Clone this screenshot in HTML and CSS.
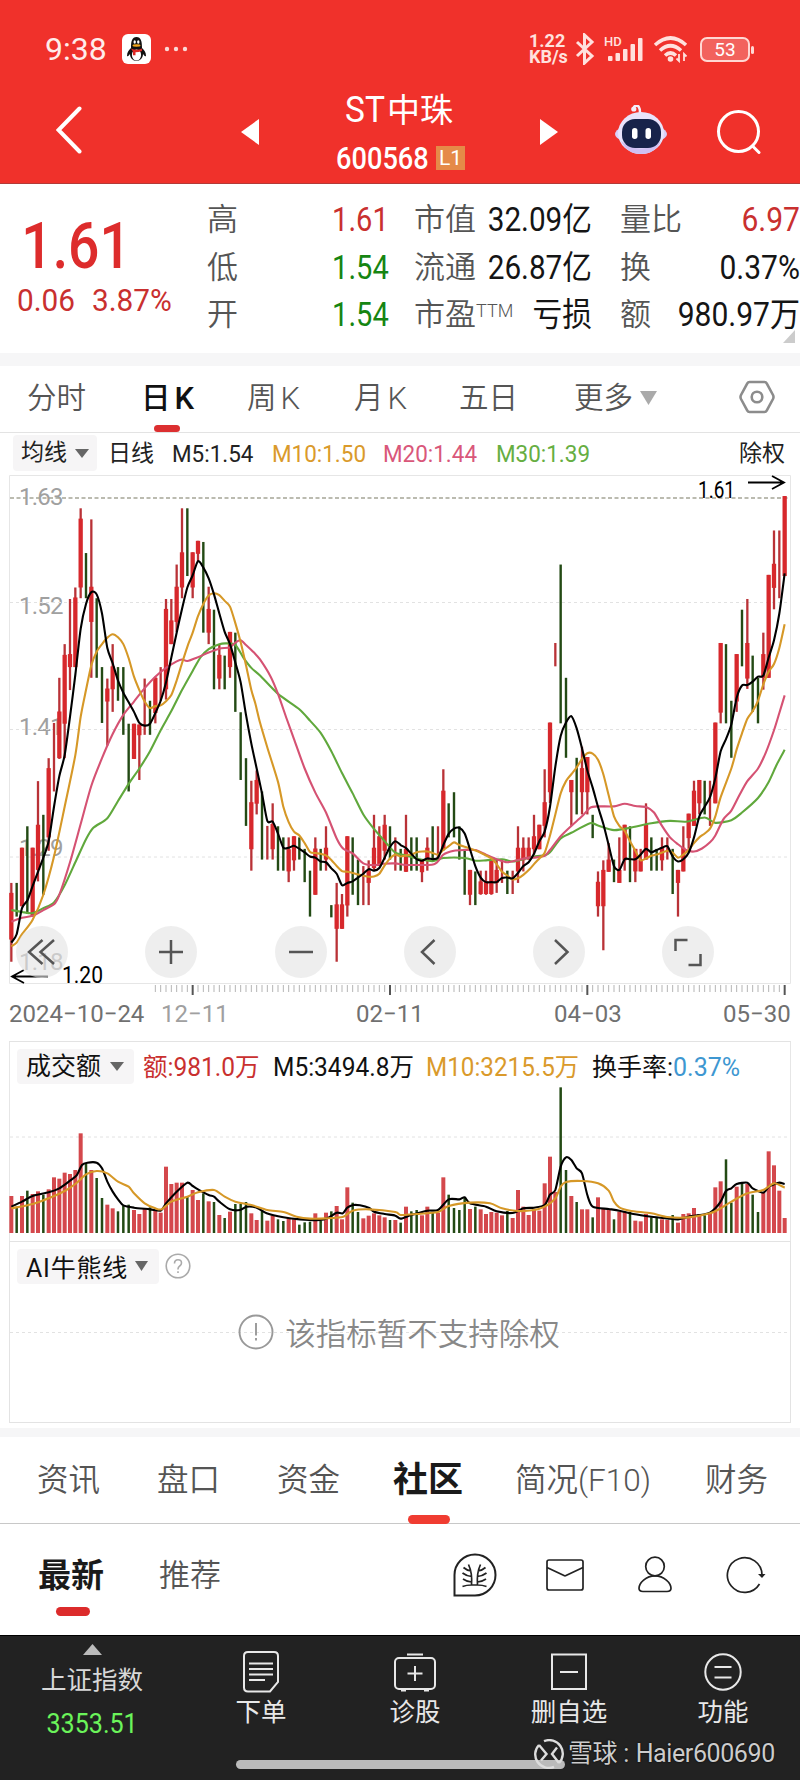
FILE: index.html
```html
<!DOCTYPE html>
<html lang="zh-CN">
<head>
<meta charset="utf-8">
<title>ST中珠 600568</title>
<link rel="stylesheet" href="styles.css">
</head>
<body>
<header class="top">
  <div class="status">
    <span class="clock">9:38</span>
    <svg class="qq" width="29" height="30" viewBox="0 0 29 30"><rect width="29" height="30" rx="6" fill="#fff"/><path d="M5 22c0-4 2-6 4-8C9 7 10 3 14.500 3s5.500 4 5.500 11c2 2 4 4 4 8-1 1-2-1-3-2 0 4-3 7-6.500 7S8 24 8 20c-1 1-2 3-3 2z" fill="#111"/><ellipse cx="14.500" cy="21" rx="4.600" ry="5.500" fill="#fff"/><ellipse cx="12.700" cy="8" rx="1.200" ry="1.700" fill="#fff"/><ellipse cx="16.300" cy="8" rx="1.200" ry="1.700" fill="#fff"/><ellipse cx="14.500" cy="11.500" rx="4" ry="1.200" fill="#f2a51c"/><path d="M9 14.500q5.500 2.500 11 0v2.600q-3.500 1.200-6.500 1.200v3h-2.500v-3.500z" fill="#e02b26"/></svg>
    <svg class="dots" width="24" height="6" viewBox="0 0 24 6" fill="#fbd9d6"><circle cx="3" cy="3" r="2.200"/><circle cx="12" cy="3" r="2.200"/><circle cx="21" cy="3" r="2.200"/></svg>
    <span class="rate">1.22<br>KB/s</span>
    <svg class="bt" width="20" height="32" viewBox="0 0 20 32" fill="none" stroke="#ffe1de" stroke-width="3"><path d="M2 9l15 14-7.500 7V2L17 9 2 23"/></svg>
    <svg class="sig" width="40" height="28" viewBox="0 0 40 28"><g fill="#ffe1de"><rect x="4" y="21" width="4.500" height="5" rx="1"/><rect x="11.500" y="18" width="4.500" height="8" rx="1"/><rect x="19" y="14" width="4.500" height="12" rx="1"/><rect x="26.500" y="9" width="4.500" height="17" rx="1"/><rect x="34" y="3" width="4.500" height="23" rx="1"/></g><text x="0" y="11" class="hd">HD</text></svg>
    <svg class="wifi" width="36" height="28" viewBox="0 0 36 28" fill="none" stroke="#ffe1de" stroke-width="3.600"><path d="M2 10Q17.500-4 33 10M7 15.500Q17.500 6 28 15.500M12 20.500Q17.500 15.500 23 20.500"/><circle cx="17.500" cy="24" r="2.800" fill="#ffe1de" stroke="none"/><path d="M26 19v7l-2.500-2.500M31 26v-7l2.500 2.500" stroke-width="1.800"/></svg>
    <span class="battery">53</span>
  </div>
  <div class="nav">
    <svg width="26" height="48" viewBox="0 0 26 48" fill="none" stroke="#fff" stroke-width="4" stroke-linecap="round" class="back"><path d="M23.500 2.500L2.500 24l21 21.500"/></svg>
    <svg width="18" height="26" viewBox="0 0 18 26" fill="#fff" class="prev"><path d="M18 0v26L0 13z"/></svg>
    <div class="title"><div class="name"><span>ST</span>中珠</div><div class="code"><span class="num">600568</span><span class="lv">L1</span></div></div>
    <svg width="18" height="26" viewBox="0 0 18 26" fill="#fff" class="next"><path d="M0 0v26l18-13z"/></svg>
    <svg width="52" height="50" viewBox="0 0 52 50" class="bot"><path d="M20 5q-2-3 0-4 5-2 5 7" fill="none" stroke="#f4eefc" stroke-width="2.500"/><circle cx="18.800" cy="4" r="2.600" fill="#f4eefc"/><ellipse cx="26" cy="29" rx="26" ry="10" fill="#d9d0f8"/><ellipse cx="26" cy="28" rx="23" ry="21" fill="#e8e3fb"/><path d="M6 36q20 15 40 0-6 13-20 13T6 36z" fill="#cfc0f2"/><rect x="7" y="14" width="39" height="29" rx="13" fill="#17234a"/><rect x="17" y="23" width="5.500" height="11" rx="2.700" fill="#fff"/><rect x="30.500" y="23" width="5.500" height="11" rx="2.700" fill="#fff"/></svg>
    <svg width="44" height="44" viewBox="0 0 44 44" fill="none" stroke="#fff" stroke-width="3" stroke-linecap="round" class="find"><circle cx="21.500" cy="21.500" r="20"/><path d="M35.500 36l6.500 6.500"/></svg>
  </div>
</header>

<section class="quote">
  <div class="last"><div class="price">1.61</div><div class="chg"><span>0.06</span><span>3.87%</span></div></div>
  <div class="cells">
    <span>高</span><b class="red">1.61</b><span>市值</span><b>32.09亿</b><span>量比</span><b class="red">6.97</b>
    <span>低</span><b class="green">1.54</b><span>流通</span><b>26.87亿</b><span>换</span><b>0.37%</b>
    <span>开</span><b class="green">1.54</b><span>市盈<i>TTM</i></span><b>亏损</b><span>额</span><b>980.97万</b>
  </div>
  <svg class="corner" width="12" height="13" viewBox="0 0 12 13"><path d="M12 0v13H0z" fill="#ccc"/></svg>
</section>

<nav class="periods">
  <span>分时</span><span class="on">日<em>K</em></span><span>周<em>K</em></span><span>月<em>K</em></span><span>五日</span><span>更多<svg width="17" height="14" viewBox="0 0 17 14"><path d="M0 0h17L8.500 14z" fill="#aaa"/></svg></span>
  <svg class="gear" width="36" height="34" viewBox="0 0 36 34" fill="none" stroke="#8c8c8c" stroke-width="2.600" stroke-linejoin="round"><path d="M10.500 2h15q1.500 0 2.200 1.300l6.300 11.700q1 2 0 4l-6.300 11.700q-.7 1.300-2.200 1.300h-15q-1.500 0-2.200-1.300L2 19q-1-2 0-4L8.300 3.300Q9 2 10.500 2z"/><circle cx="18" cy="17" r="5.300"/></svg>
</nav>

<section class="ma">
  <span class="chip">均线<svg width="14" height="9" viewBox="0 0 14 9"><path d="M0 0h14L7 9z"/></svg></span>
  <span>日线</span><span class="n">M5:1.54</span><span class="n gold">M10:1.50</span><span class="n pink">M20:1.44</span><span class="n lime">M30:1.39</span><span>除权</span>
</section>

<section class="kline">
  <svg id="k" width="800" height="525" viewBox="0 0 800 525">
    <g class="axis"><text x="19" y="30">1.63</text><text x="19" y="139">1.52</text><text x="19" y="259.500">1.41</text><text x="19" y="381">1.29</text><text x="19" y="495">1.18</text></g>
    <path class="frame" d="M9.500 0.500H790.500V508.500H9.500z"/>
    <path class="grid" d="M10 127.500H790M10 254.500H790M10 382H790"/>
    <path class="limit" d="M10 23H790"/>
  </svg>
  <div class="tools">
    <span><svg viewBox="0 0 52 52"><path d="M26.500 14L13 26l13.500 12M38 14L24.500 26 38 38"/></svg></span>
    <span><svg viewBox="0 0 52 52"><path d="M14 26h24M26 14v24"/></svg></span>
    <span><svg viewBox="0 0 52 52"><path d="M14 26h24"/></svg></span>
    <span><svg viewBox="0 0 52 52"><path d="M30.500 14L18 26l12.500 12"/></svg></span>
    <span><svg viewBox="0 0 52 52"><path d="M22 14l12.500 12L22 38"/></svg></span>
    <span><svg viewBox="0 0 52 52"><path d="M13.500 25V14h12M26.500 39h12V28"/></svg></span>
  </div>
</section>
<div class="dates"><span>2024−10−24</span><span class="dim">12−11</span><span>02−11</span><span>04−03</span><span>05−30</span></div>

<section class="volume">
  <div class="vhead">
    <span class="chip">成交额<svg width="14" height="9" viewBox="0 0 14 9"><path d="M0 0h14L7 9z"/></svg></span>
    <span class="red v1">额:981.0万</span><span class="v2">M5:3494.8万</span><span class="gold v3">M10:3215.5万</span><span class="v4">换手率:<em>0.37%</em></span>
  </div>
  <svg id="v" width="800" height="149" viewBox="0 0 800 149"><path class="grid" d="M10 53H790"/></svg>
</section>

<section class="ai">
  <div class="aihead"><span class="chip">AI牛熊线<svg width="13" height="10" viewBox="0 0 13 10"><path d="M0 0h13L6.500 10z"/></svg></span>
  <svg width="26" height="26" viewBox="0 0 26 26"><circle cx="13" cy="13" r="11.800" fill="none" stroke="#aaa" stroke-width="1.600"/><path d="M9.500 10.500q0-3.700 3.500-3.700t3.500 3.200q0 1.700-1.800 3-1.700 1.200-1.700 3v.5M13 18.200v1.900" fill="none" stroke="#aaa" stroke-width="1.600"/></svg></div>
  <div class="notice"><svg width="36" height="36" viewBox="0 0 36 36" fill="none" stroke="#999" stroke-width="1.900"><circle cx="18" cy="18" r="16.500"/><path d="M18 9v12.500M18 24v2.500"/></svg><span>该指标暂不支持除权</span></div>
</section>

<nav class="sections"><span>资讯</span><span>盘口</span><span>资金</span><span class="on">社区</span><span>简况(F10)</span><span>财务</span></nav>
<nav class="feed">
  <span class="on">最新</span><span>推荐</span>
  <svg width="44" height="44" viewBox="0 0 44 44" fill="none" stroke="#222" stroke-width="2"><path d="M1.500 42.500V22A20.500 20.500 0 1 1 22 42.500z"/><path d="M9.500 33.500q4-1.500 9-1.500h6q5 0 9 1.500M18.500 32q1-12-3-20.500M24.500 32q-1-12 3-20.500M18 18q-4-.5-7.500-3.500M18.500 23.500q-5-.5-9-3.500M18.500 29q-4 0-8.500-3M25 18q4-.5 7.500-3.500M24.500 23.500q5-.5 9-3.500M24.500 29q4 0 8.500-3" stroke-width="1.700"/></svg>
  <svg width="38" height="32" viewBox="0 0 38 32" fill="none" stroke="#222" stroke-width="1.700"><rect x="1" y="1" width="36" height="30" rx="2"/><path d="M1 8.500L18 16.500q1 .6 2 0L37 8.500"/></svg>
  <svg width="34" height="37" viewBox="0 0 34 37" fill="none" stroke="#222" stroke-width="1.700"><circle cx="17" cy="10.500" r="9.300"/><path d="M17 19.800C8 19.800 1 27 1 32.300q0 3.200 4 3.200h24q4 0 4-3.200C33 27 26 19.800 17 19.800z"/></svg>
  <svg width="40" height="38" viewBox="0 0 40 38" fill="none" stroke="#222" stroke-width="1.700"><path d="M33.500 28A17.300 17.300 0 1 1 36 19"/><path d="M32 18h7.500L36 22z" fill="#222" stroke="none"/></svg>
</nav>

<footer class="bar">
  <div class="index"><svg width="19" height="11" viewBox="0 0 19 11"><path d="M9.500 0L19 11H0z" fill="#bbb"/></svg><span>上证指数</span><b>3353.51</b></div>
  <div class="act"><svg width="44" height="42" viewBox="0 0 44 42"><path d="M9 1h26q4 0 4 4v26l-8 9.500H9q-4 0-4-4V5q0-4 4-4z"/><path d="M10 12.500h24M10 18h24M10 23.500h24M10 29h16"/></svg><span>下单</span></div>
  <div class="act"><svg width="44" height="42" viewBox="0 0 44 42"><rect x="2" y="7" width="40" height="31" rx="4"/><path d="M14 3.500h16M22 15v15M14.500 22.500h15M8 39.500h5M31 39.500h5"/></svg><span>诊股</span></div>
  <div class="act"><svg width="44" height="42" viewBox="0 0 44 42"><path d="M5 3.500h34V38H5zM13 21h18"/></svg><span>删自选</span></div>
  <div class="act"><svg width="44" height="42" viewBox="0 0 44 42"><circle cx="22" cy="21" r="17.700"/><path d="M13.500 16h17M13.500 26.500h17"/></svg><span>功能</span></div>
  <div class="home"></div>
  <div class="mark"><svg width="30" height="30" viewBox="0 0 30 30" fill="none" stroke="#ddd" stroke-width="2.400"><path d="M10 2.200A13.500 13.500 0 0 1 25 24M20 27.800A13.500 13.500 0 0 1 5 6"/><path d="M5 6l7.500 9L7 21.500M25 24l-7-9 5-6.500"/></svg><span>雪球<i>:</i> Haier600690</span></div>
</footer>
<script src="chart.js"></script>
</body>
</html>
```
FILE: styles.css
```css
* { box-sizing: border-box; }
body { margin: 0; width: 800px; height: 1780px; overflow: hidden; background: #fff; color: #111; font-family: Roboto, "Noto Sans CJK SC", sans-serif; }
span, b, div { white-space: nowrap; }
svg { display: block; flex: none; }
em, i { font-style: normal; }
.red { color: #c9302f; }
.green { color: #168512; }
.gold { color: #da9a2b; }
.pink { color: #d9577a; }
.lime { color: #66ae42; }

.top { height: 184px; background: #f0312b; border-bottom: 1px solid #b33a38; color: #fff; }
.status { display: flex; align-items: center; height: 98px; padding-left: 45px; }
.clock { width: 77px; font-size: 32px; color: #ffecea; }
.dots { margin-left: 13px; }
.rate { width: 48px; margin-left: 341px; font-size: 18px; line-height: 16px; font-weight: 700; color: #ffe1de; }
.bt { margin-left: -2px; }
.sig { margin-left: 9px; }
.hd { font-size: 13px; font-weight: 500; fill: #ffe1de; }
.wifi { margin-left: 9px; }
.battery { position: relative; width: 50px; height: 25px; margin-left: 11px; border: 2px solid #ffd7d3; border-radius: 7px; background: #f2625d; color: #fff; font-size: 19px; line-height: 22px; text-align: center; }
.battery::after { content: ""; position: absolute; right: -6px; top: 7px; width: 3px; height: 8px; border-radius: 2px; background: #ffd7d3; }
.nav { display: grid; grid-template-columns: 185px 95px 204px 75px 102px 60px; padding-left: 56px; height: 85px; }
.back { margin-top: 8px; }
.prev, .next { margin-top: 21px; }
.bot { margin-top: 7px; }
.find { margin-top: 12px; }
.title { margin-top: -10px; }
.name { height: 47px; margin-left: 9px; font-size: 33px; line-height: 44px; }
.name span { display: inline-block; width: 42px; font-size: 36px; transform: scaleX(.93); transform-origin: left; }
.title .code { display: flex; align-items: center; height: 45px; }
.num { width: 100px; font-size: 32px; transform: scaleX(.85); transform-origin: left; font-weight: 500; }
.lv { width: 29px; height: 24px; background: #e58a48; font-size: 21px; line-height: 25px; text-align: center; }

.quote { position: relative; display: flex; height: 169px; }
.last { width: 207px; }
.price { height: 88px; padding: 24px 0 0 25px; font-size: 65px; line-height: 76px; font-weight: 500; color: #dd2c2c; transform: scaleX(.85); transform-origin: left; }
.chg { display: flex; height: 60px; padding: 10px 0 0 17px; font-size: 32px; line-height: 36px; color: #c9302f; }
.chg span { width: 75px; transform: scaleX(.93); transform-origin: left; }
.cells { display: grid; grid-template-columns: 89px 118px 70px 136px 55px 125px; grid-template-rows: repeat(3, 47.500px); padding-top: 12px; font-size: 31px; line-height: 48px; color: #555; font-weight: 350; }
.cells b { display: flex; font-size: 33px; font-weight: 400; color: #151515; transform: scaleX(.88); transform-origin: left; }
.cells b:nth-child(6n+2) { padding-left: 41px; }
.cells b:nth-child(6n+4) { justify-content: flex-end; width: 108px; transform: scaleX(.9); transform-origin: right; }
.cells b:nth-child(6n) { justify-content: flex-end; transform: scaleX(.91); transform-origin: right; }
.cells b.red { color: #c9302f; }
.cells b.green { color: #168512; }
.cells span i { font-size: 18px; line-height: 0; vertical-align: 8px; }
.corner { position: absolute; right: 5px; bottom: 10px; }

.periods { display: grid; grid-template-columns: 114px 106px 107px 105px 115px 165px 36px; height: 80px; border-top: 13px solid #f6f6f7; border-bottom: 1px solid #e3e3e3; padding-left: 27px; font-size: 29.500px; line-height: 61px; color: #555; font-weight: 350; }
.periods span { display: flex; align-items: center; height: 64px; }
.periods em { margin-left: 4px; font-size: 31px; }
.periods svg { margin-left: 7px; }
.periods .gear { margin: 14px 0 0; }
.periods .on { position: relative; color: #111; font-weight: 500; }
.periods .on::after { content: ""; position: absolute; left: 13px; top: 59px; width: 26px; height: 7px; border-radius: 4px; background: #dc2f30; }

.chip { display: flex; align-items: center; background: #f6f5f6; border-radius: 4px; }
.chip svg { fill: #666; }
.ma { display: grid; grid-template-columns: 95px 64px 100px 111px 113px 243px 60px; height: 42px; padding: 2px 0 0 13px; font-size: 23px; line-height: 38px; color: #222; }
.ma .chip { width: 84px; height: 36px; padding-left: 8px; gap: 8px; }
.ma .n { font-size: 23.500px; transform: scaleX(.955); transform-origin: left; }
.ma .gold { color: #da9a2b; }
.ma .pink { color: #d9577a; }
.ma .lime { color: #66ae42; }

.kline { position: relative; height: 525px; }
.axis text { font-size: 24px; font-weight: 450; fill: #a0a0a0; letter-spacing: -.8px; }
.frame { fill: none; stroke: #e6e6e6; }
.grid { stroke: #e2e2e2; stroke-dasharray: 3 3; }
.limit { stroke: #a5a596; stroke-width: 1.500; stroke-dasharray: 4 2.500; }
.up { fill: #d7282c; }
.upwick { fill: #b93237; }
.down { fill: #234a14; }
.upvol { fill: #d4484c; }
.line { fill: none; stroke-width: 2.100; stroke-linejoin: round; }
.m5 { stroke: #000; }
.m10 { stroke: #d69827; }
.m20 { stroke: #d55273; }
.m30 { stroke: #60a83c; }
.tick { stroke: #b5b5b5; }
.major { stroke: #555; stroke-width: 2; }
.call { font-size: 23px; fill: #000; }
.arrow { fill: none; stroke: #000; stroke-width: 1.800; }
.tools { position: absolute; left: 16px; top: 451px; display: flex; gap: 77.300px; }
.tools span { width: 52px; height: 52px; border-radius: 50%; background: rgba(228, 228, 228, .62); }
.tools path { fill: none; stroke: #555; stroke-width: 2.500; }
.dates { display: grid; grid-template-columns: 152px 195px 198px 169px 70px; padding-left: 9px; height: 41px; font-size: 24px; font-weight: 450; line-height: 28px; color: #707070; }
.dates .dim { color: #a0a0a0; }

.volume { height: 200px; border-top: 1px solid #e3e3e3; margin: 0 9px; border-left: 1px solid #e6e6e6; border-right: 1px solid #e6e6e6; }
.volume > svg { margin-left: -10px; }
.vhead { display: grid; grid-template-columns: 126px 130px 153px 166px 170px; height: 42px; padding: 7px 0 0 7px; font-size: 25px; line-height: 37px; }
.vhead .chip { width: 117px; height: 35px; padding-left: 9px; gap: 9px; }
.vhead > span { transform-origin: left; }
.v1, .v2 { transform: scaleX(.98); }
.v3 { transform: scaleX(.97); }
.v4 em { color: #3e97d1; }
.ai { height: 182px; margin: 0 9px; border: 1px solid #e3e3e3; background: linear-gradient(90deg, #e2e2e2 50%, transparent 50%) 0 90px / 6px 1px repeat-x; }
.aihead { display: flex; align-items: center; height: 48px; padding-left: 7px; gap: 6px; }
.aihead .chip { width: 142px; height: 35px; padding-left: 9px; gap: 7px; font-size: 25px; letter-spacing: .8px; }
.notice { display: flex; align-items: center; justify-content: center; gap: 11px; height: 60px; margin: 12px 2px 0 0; font-size: 30.500px; font-weight: 350; color: #888; }

.sections { display: grid; grid-template-columns: 120px 120px 116px 122px 190px 70px; height: 96px; margin-top: 5px; border-top: 9px solid #f6f6f7; border-bottom: 1.500px solid #c8c8c8; padding-left: 37px; font-size: 31.500px; line-height: 88px; color: #555; font-weight: 350; }
.sections .on, .feed .on { position: relative; color: #1a1a1a; font-weight: 700; }
.sections .on { font-size: 35px; }
.sections .on::after, .feed .on::after { content: ""; position: absolute; height: 9px; border-radius: 5px; background: #f03c31; }
.sections .on::after { left: 15px; bottom: 1px; width: 42px; }
.feed { display: grid; grid-template-columns: 121px 294px 93px 92px 88px 40px; align-items: center; height: 111px; padding: 0 0 10px 38px; font-size: 31px; color: #555; font-weight: 350; }
.feed span { margin-top: -4px; }
.feed .on { font-size: 33px; }
.feed .on::after { left: 18px; top: 58px; width: 34px; background: #dc2b2b; }

.bar { position: relative; display: grid; grid-template-columns: 184px 154px 154px 154px 154px; height: 146px; background: #222; border-top: 1px solid #000; color: #e8e8e8; font-size: 25.500px; }
.index { display: flex; flex-direction: column; align-items: center; padding-top: 8px; color: #d8d8d8; }
.index span { margin-top: 5px; line-height: 40px; }
.index b { font-size: 27px; font-weight: 400; color: #6bf45a; line-height: 48px; transform: scaleX(.93); }
.act { display: flex; flex-direction: column; align-items: center; padding-top: 15px; }
.act svg { fill: none; stroke: #e8e8e8; stroke-width: 2; }
.act span { line-height: 38px; }
.home { position: absolute; left: 236px; top: 124px; width: 329px; height: 9px; border-radius: 5px; background: #bbb; }
.mark { position: absolute; left: 534px; top: 102px; display: flex; align-items: center; gap: 4px; font-size: 25px; line-height: 32px; color: #ccc; text-shadow: 0 0 2px #000; }
.mark span { letter-spacing: -.4px; }
.mark i { margin: 0 1px 0 6px; }
```
FILE: chart.js
```javascript
// Each candle: direction, wick top, wick bottom, optional body top and bottom.
const candles = `r1184,1390,1210,1332 g1184,1272 r1092,1245,1092,1245 g1036,1265 r1092,1272,1092,1272 r918,1180,1032,1150 g1006,1215 r858,1100,884,1065 r766,945 r648,860,736,858 r560,858,588,768 r442,680,586,620 r412,620,438,620 r205,440,232,412 g322,440 r234,648,410,502 g440,648 g620,766 r650,825,676,710 r560,737,618,678 g620,708 g620,797 g768,945 r768,860,768,860 r770,915,770,798 r650,797 g708,797 r645,767,648,740 r620,708 r442,705,468,678 r442,560,498,560 r352,528,410,502 r205,440,320,412 g205,382 r320,440,320,412 r290,345,290,324 g293,530 r410,560,468,530 g470,678 r560,678,588,650 g590,678 r528,648,528,620 g530,737 g738,915 g858,1035 r917,1152,973,1096 r890,1005,915,977 g945,1123 r1035,1123 r976,1123,1030,1096 g1036,1152 g1065,1152 r1065,1182,1096,1154 r1062,1152,1062,1125 g1065,1123 g1095,1182 g1152,1272 r1065,1215,1094,1215 g1095,1152 r1036,1152,1092,1123 g1242,1274 r1184,1390,1240,1304 r1213,1304,1240,1304 r1062,1272,1062,1243 g1065,1215 g1123,1242 r1140,1242 r1125,1242,1152,1184 r1006,1150,1092,1145 r1036,1140,1062,1140 r1006,1123,1032,1100 g1036,1123 r1065,1152 g1095,1152 r1006,1155,1095,1155 g1065,1152 g1065,1152 r1123,1182,1125,1156 r1065,1152,1092,1125 g1036,1123 r1036,1125 r887,1100,943,1096 g976,1065 g947,1065 g1036,1123 g1095,1215 r1150,1242,1150,1215 g1154,1242 r1152,1215,1180,1213 r1152,1215,1180,1213 r1123,1215,1123,1213 r1123,1210,1150,1184 r1123,1184 g1152,1213 r1152,1213 r1036,1184,1092,1154 r1065,1154,1092,1125 r1065,1123,1092,1123 r1006,1110,1062,1096 r1032,1096,1032,1096 r887,1065,973,1035 r765,975,765,947 r557,618 g352,767 g648,857 r915,1035,915,947 g857,1005 r828,1005,884,947 r855,1005,855,947 g1006,1067 r1154,1272,1181,1245 r1125,1360,1150,1245 r1080,1155,1123,1155 g1123,1182 r1065,1184,1150,1184 r1032,1152,1032,1125 g1036,1182 r1095,1182,1095,1154 r1095,1154,1123,1154 r976,1123,1032,1123 g1065,1152 g1095,1152 r1065,1152,1092,1125 r1065,1123 g1095,1213 r1150,1272,1150,1184 r1036,1154,1092,1154 r1003,1095,1003,1067 r917,1035,943,1035 r915,1005,915,976 g917,1005 r917,1035 r765,976,765,976 r557,767,557,739 g560,767 g708,857 r586,737,586,710 g470,618 r442,677,557,650 g590,737 g648,767 r530,679,586,648 r379,648,379,648 r263,469,350,413 r263,440 r173,382,173,382`.split(" ");
const volumes = [498,530,498,482,492,484,494,478,442,446,428,432,420,310,400,420,444,504,524,535,544,528,524,540,552,534,532,542,548,410,462,458,458,500,480,510,490,514,516,555,564,545,522,522,516,550,570,542,572,556,568,573,565,568,584,577,575,550,572,548,544,528,568,472,518,546,565,557,550,556,562,570,570,578,530,544,540,556,530,546,548,442,494,534,540,502,537,530,538,552,546,548,556,543,564,480,530,555,538,542,460,380,486,172,420,498,516,538,538,562,502,534,538,568,545,546,545,572,574,552,562,562,568,570,555,578,552,550,534,552,556,548,472,454,388,518,470,458,462,494,546,488,364,406,482,564];

const priceLines = {
  m30: [[0,"34,1255 66,1260 98,1263 130,1250 162,1235 194,1190 226,1130 258,1070 280,1040 322,1015 354,970 386,925 418,885 450,840 482,785 514,735 546,680 578,630 602,594 626,573 658,560 680,558 706,562 730,595 754,622"],[780,"0,642 54,690 118,730 150,760 182,792 214,840 246,897 278,950 310,1005 342,1043 374,1075 406,1105 438,1112 470,1120 518,1127 550,1119 614,1119 646,1126 678,1125 726,1122 758,1128 806,1118"],[1590,"12,1115 44,1112 60,1104 92,1068 124,1053 180,1028 204,1034 252,1046 300,1040 364,1028 420,1022 468,1024 524,1013 556,1027 604,1020 636,1000 684,962 716,920 740,875 764,836"]],
  m20: [[0,"34,1285 66,1275 98,1270 130,1255 162,1240 178,1215 210,1130 242,1030 274,930 306,858 338,795 370,745 402,710 434,675 466,645 498,622 530,605 546,600 562,604 594,594 626,582 658,572 690,568 706,556 722,550 738,562 762,582"],[780,"0,600 32,645 54,690 80,755 102,808 134,885 166,948 198,1000 230,1068 250,1095 278,1107 310,1133 342,1138 370,1134 406,1133 440,1137 522,1135 550,1110 582,1100 614,1098 646,1098 678,1110 710,1122 742,1130 774,1124 806,1118"],[1590,"12,1118 44,1113 60,1098 92,1062 124,1035 156,1010 180,988 204,984 252,984 284,977 316,983 350,986 372,1000 396,1035 420,1065 444,1083 468,1098 492,1102 516,1094 540,1078 556,1060 580,1018 604,995 628,955 652,918 684,885 708,842 732,785 748,740 764,694"]],
  m10: [[0,"34,1350 50,1340 66,1318 98,1280 130,1215 162,1115 194,985 226,850 242,750 258,680 274,615 290,580 306,560 322,543 338,534 354,542 370,560 386,597 402,645 418,680 434,710 450,727 466,722 482,720 498,709 514,693 530,655 546,610 562,567 578,530 594,487 610,455 626,433 642,427 658,432 674,447 690,462 706,505 722,555 738,615 754,680 766,715"],[780,"0,765 22,830 54,920 70,985 86,1025 102,1050 118,1060 134,1080 150,1103 166,1106 182,1108 198,1112 214,1124 230,1140 246,1153 262,1155 278,1158 294,1162 310,1165 326,1168 342,1167 358,1160 374,1138 390,1120 406,1110 422,1115 438,1112 454,1110 470,1104 486,1102 502,1102 518,1106 534,1110 550,1098 566,1088 582,1078 598,1085 630,1094 662,1105 694,1120 710,1135 726,1155 742,1165 758,1175 774,1172 790,1163"],[1590,"0,1147 12,1135 28,1120 44,1105 60,1060 76,1005 92,950 108,918 124,900 140,882 156,860 172,845 188,846 204,862 220,900 236,955 252,1010 268,1035 284,1048 300,1075 316,1100 332,1125 348,1120 364,1113 380,1110 412,1100 428,1105 444,1118 460,1110 476,1098 492,1080 508,1065 524,1055 540,1042 556,1010 572,960 604,885 620,835 636,793 652,755 668,735 684,708 700,665 716,632 732,612 748,570 764,508"]],
  m5: [[0,"34,1340 50,1318 66,1250 82,1230 98,1192 114,1155 130,1118 146,1075 162,985 178,905 194,850 210,750 226,640 242,520 258,455 274,424 290,430 306,480 322,570 338,610 354,655 370,687 386,712 402,737 418,766 434,773 450,768 466,740 482,708 498,660 514,595 530,530 546,468 562,412 578,380 594,343 610,360 626,388 642,430 658,480 674,528 690,560 706,608 722,660 738,745 754,820 770,885 786,950 802,1022"],[780,"38,1024 54,1055 70,1092 86,1092 102,1087 118,1095 134,1104 150,1115 166,1118 182,1128 198,1130 214,1146 230,1160 246,1190 262,1184 278,1180 294,1170 310,1160 326,1148 342,1152 358,1145 374,1118 390,1090 406,1075 422,1085 438,1093 454,1108 470,1122 486,1126 502,1120 518,1122 534,1118 550,1085 566,1056 582,1042 598,1040 614,1055 630,1096 646,1140 662,1170 678,1182 694,1182 710,1182 726,1171 742,1170 758,1172 774,1158 790,1140 806,1130"],[1590,"12,1108 28,1075 44,1050 60,985 76,880 92,800 108,765 124,748 140,780 156,832 172,890 188,935 204,985 220,1030 236,1085 252,1140 268,1150 284,1122 300,1122 316,1122 332,1110 348,1095 364,1104 380,1098 396,1092 412,1088 428,1115 444,1128 460,1122 476,1105 492,1065 508,1010 524,985 540,960 556,910 572,840 588,808 604,770 620,700 636,668 652,667 668,658 684,645 700,642 716,595 732,550 748,480 764,375"]]
};
const volumeLines = {
  m5: [[0,"34,530 66,515 98,498 146,487 178,475 210,452 230,436 246,405 262,398 290,398 306,415 322,455 338,485 354,508 370,526 402,533 450,538 482,542 498,520 530,485 562,458 578,468 594,478 626,495 642,500 658,515 690,538 720,540 740,530 770,533 800,550 850,562 900,568 960,570 985,563 1010,548 1028,550 1042,533 1060,525 1080,526 1108,534 1122,545 1154,552 1186,557"],[1200,"2,566 34,555 82,542 114,540 146,508 178,508 194,502 210,520 258,530 290,544 338,549 370,535 402,533 434,525 450,494 466,480 482,410 498,382 514,390 530,415 546,430 562,495 578,530 626,537 658,542 700,552 754,560 802,565 834,568 866,560 914,553 930,548 946,535 962,515 978,483 994,475 1010,462 1042,458 1058,475 1090,488 1106,470 1122,463 1138,458 1154,462"]],
  m10: [[0,"34,535 98,522 146,505 194,483 226,462 258,433 290,423 322,430 354,455 386,470 402,490 434,520 466,535 485,538 514,515 562,500 594,487 642,480 674,500 706,515 754,525 802,540 850,546 890,560 930,566 980,565 1030,560 1058,542 1108,538 1186,546"],[1200,"2,555 50,552 114,546 146,528 210,518 270,520 306,535 354,543 402,540 434,530 466,505 482,470 498,456 546,453 594,460 626,482 642,515 658,532 690,542 754,550 802,561 866,562 930,550 962,535 994,515 1042,490 1090,480 1122,460 1154,473"]]
};

const px = x => x / 3;
const priceY = y => (y - 118) / 2.6133;
const volumeY = y => (y - 162) / 3;

function add(parent, name, attrs, text) {
  const el = document.createElementNS("http://www.w3.org/2000/svg", name);
  for (const key in attrs) el.setAttribute(key, attrs[key]);
  if (text) el.textContent = text;
  parent.appendChild(el);
}
function bar(parent, x, top, bottom, width, cls) {
  add(parent, "rect", { x: x - width / 2, y: top, width, height: bottom - top, class: cls });
}
// Catmull-Rom spline through every point.
function curve(parts, toY) {
  const p = parts.flatMap(([dx, s]) => s.split(" ").map(t => {
    const [x, y] = t.split(",").map(Number);
    return [px(x + dx), toY(y)];
  }));
  let d = `M${p[0]}`;
  for (let i = 0; i < p.length - 1; i++) {
    const a = p[i - 1] || p[i], b = p[i], c = p[i + 1], e = p[i + 2] || c;
    d += `C${b[0] + (c[0] - a[0]) / 8},${b[1] + (c[1] - a[1]) / 8} ${c[0] - (e[0] - b[0]) / 8},${c[1] - (e[1] - b[1]) / 8} ${c}`;
  }
  return d;
}

const k = document.getElementById("k");
const v = document.getElementById("v");
candles.forEach((item, i) => {
  const x = px(34 + 16 * i);
  const up = item[0] === "r";
  const [top, bottom, bodyTop, bodyBottom] = item.slice(1).split(",").map(Number);
  bar(k, x, priceY(top), priceY(bottom), up ? 2.3 : 2.4, up ? "upwick" : "down");
  if (bodyTop) bar(k, x, priceY(bodyTop), priceY(bodyBottom), 4.3, "up");
  bar(v, x, volumeY(volumes[i]), 149, up ? 4 : 2.5, up ? "upvol" : "down");
});
for (const m in priceLines) add(k, "path", { d: curve(priceLines[m], priceY), class: "line " + m });
for (const m in volumeLines) add(v, "path", { d: curve(volumeLines[m], volumeY), class: "line " + m });
for (let i = 27; i < 146; i++) {
  const x = px(34 + 16 * i);
  const major = [34, 71, 108, 145].includes(i);
  add(k, "path", { d: `M${x} 510V${major ? 520 : 517}`, class: major ? "major" : "tick" });
}
add(k, "text", { x: 62, y: 508, class: "call", textLength: 41, lengthAdjust: "spacingAndGlyphs" }, "1.20");
add(k, "text", { x: 698, y: 22.500, class: "call", textLength: 37, lengthAdjust: "spacingAndGlyphs" }, "1.61");
add(k, "path", { d: "M48 501.500H12M24 495L12 501.500L24 508M748 7.500H784M772 1L784 7.500L772 14", class: "arrow" });
```
